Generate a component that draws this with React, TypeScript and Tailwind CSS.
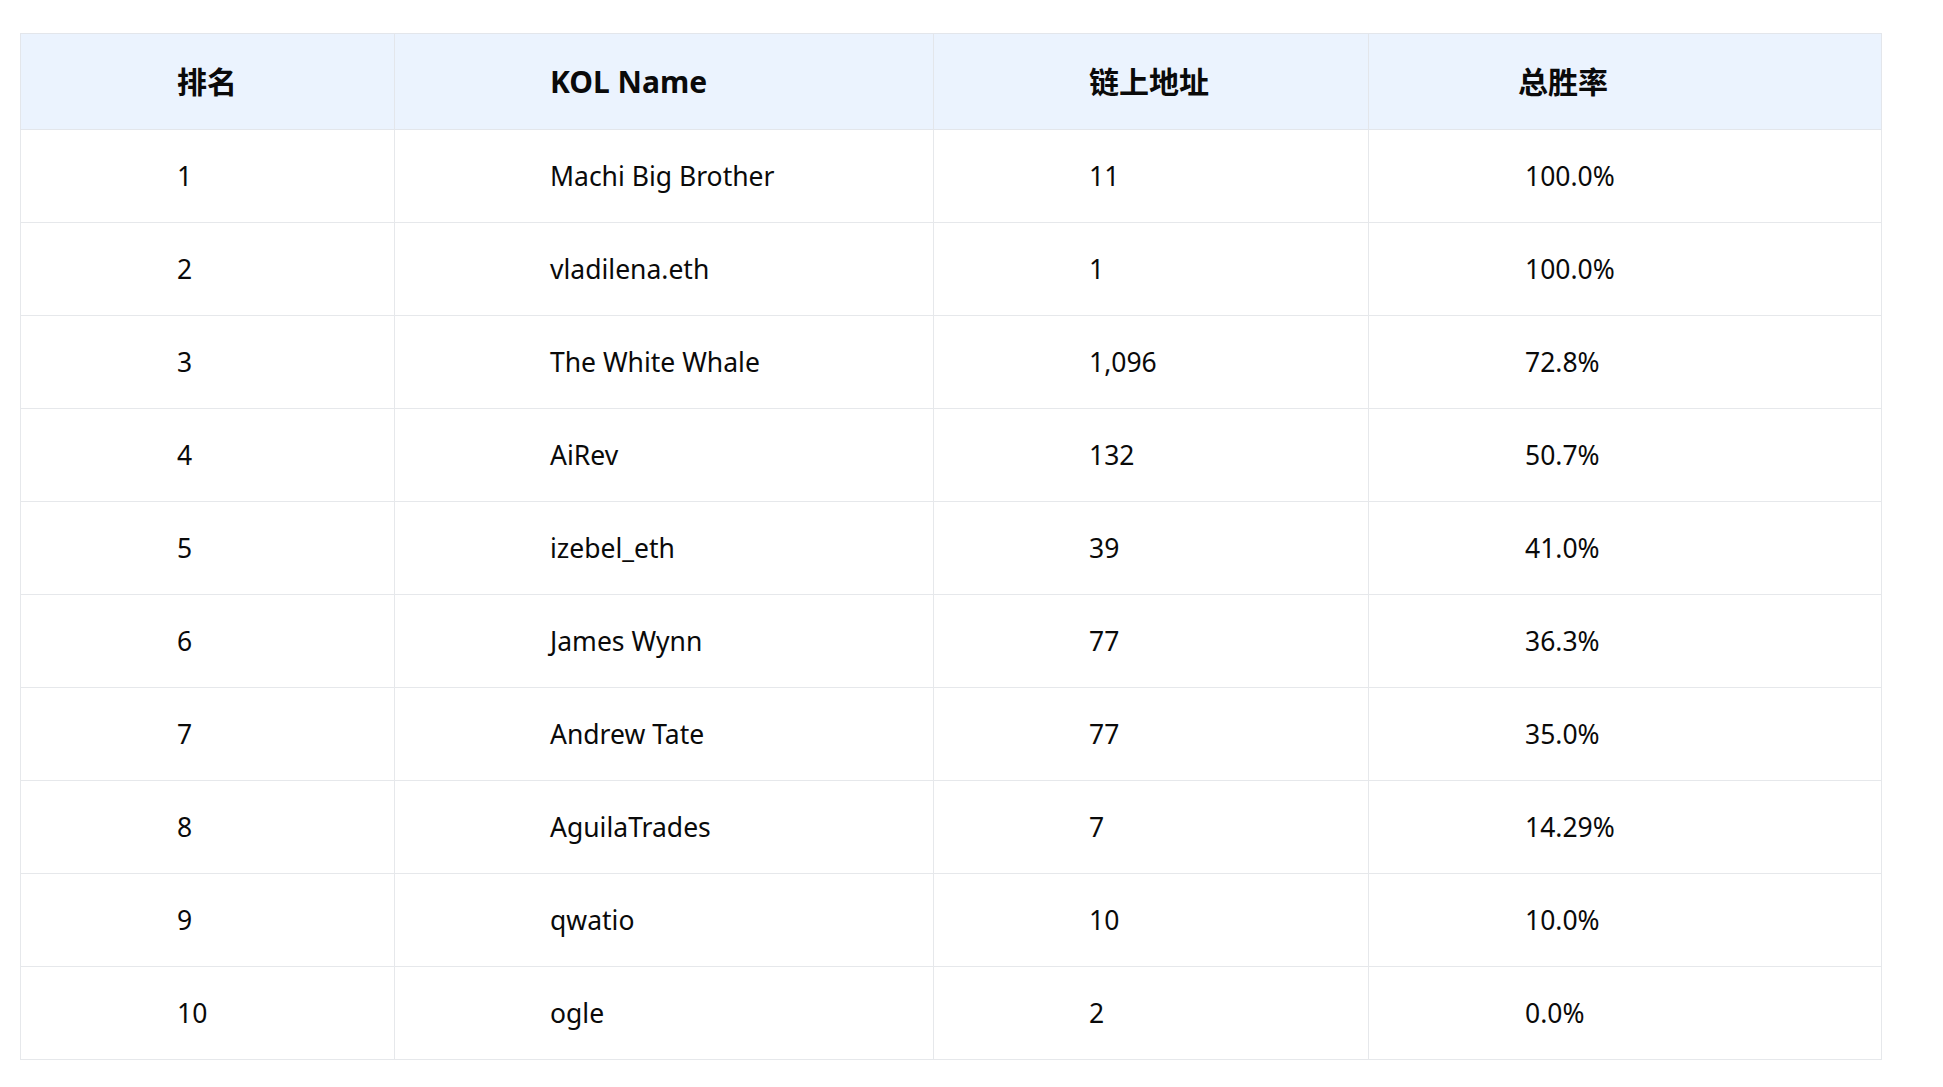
const rows = [
  { rank: 1, name: 'Machi Big Brother', addr: '11', rate: '100.0%' },
  { rank: 2, name: 'vladilena.eth', addr: '1', rate: '100.0%' },
  { rank: 3, name: 'The White Whale', addr: '1,096', rate: '72.8%' },
  { rank: 4, name: 'AiRev', addr: '132', rate: '50.7%' },
  { rank: 5, name: 'izebel_eth', addr: '39', rate: '41.0%' },
  { rank: 6, name: 'James Wynn', addr: '77', rate: '36.3%' },
  { rank: 7, name: 'Andrew Tate', addr: '77', rate: '35.0%' },
  { rank: 8, name: 'AguilaTrades', addr: '7', rate: '14.29%' },
  { rank: 9, name: 'qwatio', addr: '10', rate: '10.0%' },
  { rank: 10, name: 'ogle', addr: '2', rate: '0.0%' },
];

export default function App() {
  return (
    <div
      className="min-h-screen bg-white pl-[20px] pt-[33px]"
      style={{ fontFamily: '"Noto Sans", "Noto Sans CJK SC", sans-serif' }}
    >
      <table className="w-[1861px] table-fixed border-collapse text-[26.5px] text-[#0a0a0a]">
        <colgroup>
          <col className="w-[374px]" />
          <col className="w-[539px]" />
          <col className="w-[435px]" />
          <col className="w-[513px]" />
        </colgroup>
        <thead>
          <tr className="h-[96px] bg-[#ebf3fe]">
            <th className="border border-[#e3e6eb] pl-[156px] text-left text-[30px] font-bold">排名</th>
            <th className="border border-[#e3e6eb] pl-[155px] text-left text-[30px] font-bold">KOL Name</th>
            <th className="border border-[#e3e6eb] pl-[155px] text-left text-[30px] font-bold">链上地址</th>
            <th className="border border-[#e3e6eb] pl-[149px] text-left text-[30px] font-bold">总胜率</th>
          </tr>
        </thead>
        <tbody>
          {rows.map((r) => (
            <tr key={r.rank} className="h-[93px]">
              <td className="border border-[#e6e8eb] pl-[156px] pt-[2px]">{r.rank}</td>
              <td className="border border-[#e6e8eb] pl-[155px] pt-[2px]">{r.name}</td>
              <td className="border border-[#e6e8eb] pl-[155px] pt-[2px]">{r.addr}</td>
              <td className="border border-[#e6e8eb] pl-[156px] pt-[2px]">{r.rate}</td>
            </tr>
          ))}
        </tbody>
      </table>
    </div>
  );
}
